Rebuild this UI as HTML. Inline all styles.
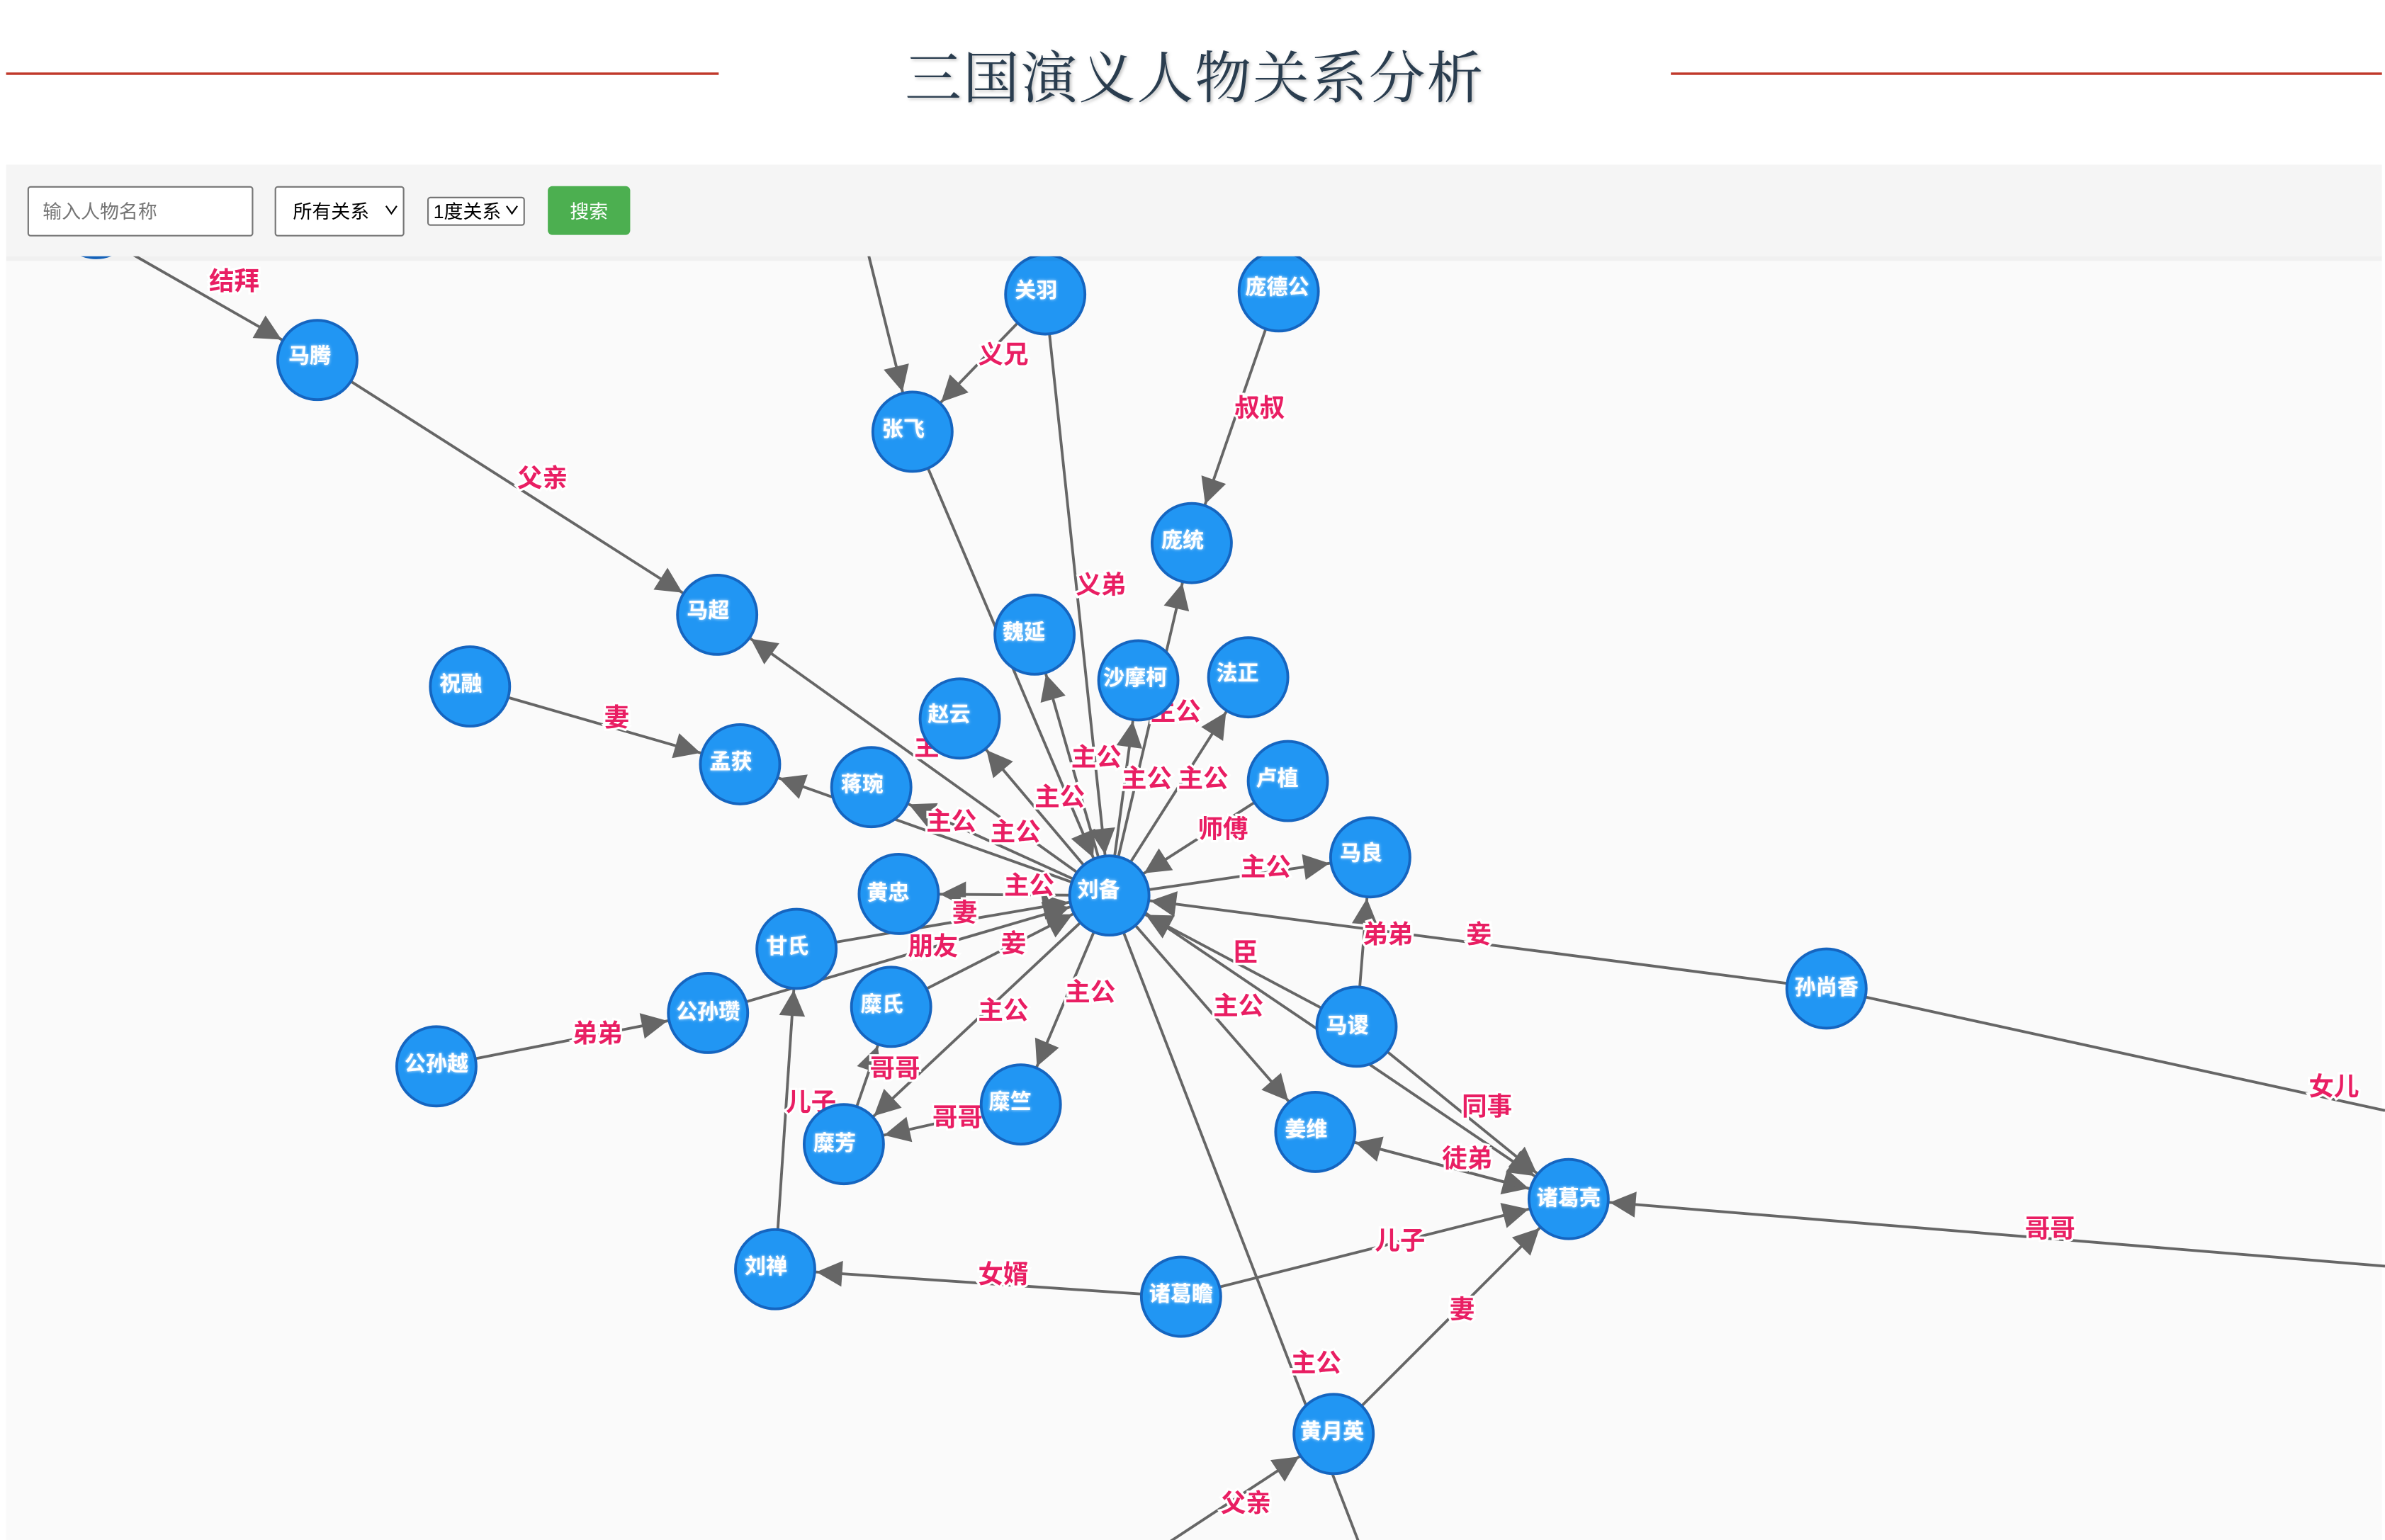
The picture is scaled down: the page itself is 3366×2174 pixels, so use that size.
<!DOCTYPE html>
<html><head><meta charset="utf-8">
<style>
html,body{margin:0;padding:0;background:#fff;}
svg{display:block;}
.t{font-family:"Liberation Sans","Noto Sans CJK SC",sans-serif;}
.lbl{font-family:"Liberation Sans","Noto Sans CJK SC",sans-serif;font-size:16.5px;fill:#e91e63;stroke:#fff;stroke-width:3px;paint-order:stroke;font-weight:600;}
.nl{font-family:"Liberation Sans","Noto Sans CJK SC",sans-serif;font-size:14px;fill:#fff;font-weight:700;}
.e{stroke:#666;stroke-width:1.8;fill:none;}
.n{fill:#2196f3;stroke:#1565c0;stroke-width:1.8;}
</style></head><body>
<svg width="3366" height="2174" viewBox="0 0 1563 1009.5" preserveAspectRatio="none" xmlns="http://www.w3.org/2000/svg">
<defs>
<marker id="a" markerUnits="userSpaceOnUse" viewBox="-50 -10 60 20" refX="0" refY="0" markerWidth="60" markerHeight="20" orient="auto">
<path d="M-44,-8.5 L-27,0 L-44,8.5 Z" fill="#666"/>
</marker>
<filter id="sh"><feDropShadow dx="1" dy="1" stdDeviation="1" flood-color="#000" flood-opacity="0.25"/></filter>
<filter id="gl"><feDropShadow dx="0" dy="0" stdDeviation="1" flood-color="#fff" flood-opacity="0.8"/></filter>
</defs>
<rect x="0" y="0" width="1563" height="1010" fill="#fff"/>
<rect x="4" y="47.5" width="467" height="1.6" fill="#c0392b"/>
<rect x="1095" y="47.5" width="466" height="1.6" fill="#c0392b"/>
<text x="783" y="64" text-anchor="middle" filter="url(#sh)" style="font-family:'Liberation Serif','Noto Serif CJK SC',serif;font-size:37px;fill:#2c3e50;letter-spacing:1px">三国演义人物关系分析</text>
<rect x="4" y="168" width="1557" height="842" fill="#fafafa"/>

<g class="e">
<line x1="40" y1="140" x2="208" y2="236" marker-end="url(#a)"/>
<line x1="208" y1="236" x2="470" y2="403" marker-end="url(#a)"/>
<line x1="727" y1="587" x2="470" y2="403" marker-end="url(#a)"/>
<line x1="560" y1="130" x2="598" y2="283" marker-end="url(#a)"/>
<line x1="685" y1="193" x2="598" y2="283" marker-end="url(#a)"/>
<line x1="685" y1="193" x2="727" y2="587" marker-end="url(#a)"/>
<line x1="598" y1="283" x2="727" y2="587" marker-end="url(#a)"/>
<line x1="838" y1="191" x2="781" y2="356" marker-end="url(#a)"/>
<line x1="727" y1="587" x2="781" y2="356" marker-end="url(#a)"/>
<line x1="727" y1="587" x2="678" y2="416" marker-end="url(#a)"/>
<line x1="727" y1="587" x2="746" y2="446" marker-end="url(#a)"/>
<line x1="727" y1="587" x2="818" y2="444" marker-end="url(#a)"/>
<line x1="727" y1="587" x2="629" y2="471" marker-end="url(#a)"/>
<line x1="308" y1="450" x2="485" y2="501" marker-end="url(#a)"/>
<line x1="727" y1="587" x2="485" y2="501" marker-end="url(#a)"/>
<line x1="727" y1="587" x2="571" y2="516" marker-end="url(#a)"/>
<line x1="844" y1="512" x2="727" y2="587" marker-end="url(#a)"/>
<line x1="727" y1="587" x2="898" y2="562" marker-end="url(#a)"/>
<line x1="727" y1="587" x2="589" y2="586" marker-end="url(#a)"/>
<line x1="522" y1="622" x2="727" y2="587" marker-end="url(#a)"/>
<line x1="464" y1="664" x2="727" y2="587" marker-end="url(#a)"/>
<line x1="584" y1="660" x2="727" y2="587" marker-end="url(#a)"/>
<line x1="1197" y1="648" x2="727" y2="587" marker-end="url(#a)"/>
<line x1="889" y1="673" x2="898" y2="562" marker-end="url(#a)"/>
<line x1="889" y1="673" x2="727" y2="587" marker-end="url(#a)"/>
<line x1="727" y1="587" x2="862" y2="742" marker-end="url(#a)"/>
<line x1="727" y1="587" x2="669" y2="724" marker-end="url(#a)"/>
<line x1="727" y1="587" x2="553" y2="750" marker-end="url(#a)"/>
<line x1="669" y1="724" x2="553" y2="750" marker-end="url(#a)"/>
<line x1="553" y1="750" x2="584" y2="660" marker-end="url(#a)"/>
<line x1="508" y1="832" x2="522" y2="622" marker-end="url(#a)"/>
<line x1="286" y1="699" x2="464" y2="664" marker-end="url(#a)"/>
<line x1="1197" y1="648" x2="1563" y2="728"/>
<line x1="1563" y1="830" x2="1028" y2="786" marker-end="url(#a)"/>
<line x1="889" y1="673" x2="1028" y2="786" marker-end="url(#a)"/>
<line x1="750" y1="598" x2="1028" y2="786" marker-end="url(#a)"/>
<line x1="862" y1="742" x2="1028" y2="786" marker-end="url(#a)"/>
<line x1="1028" y1="786" x2="862" y2="742" marker-end="url(#a)"/>
<line x1="774" y1="850" x2="1028" y2="786" marker-end="url(#a)"/>
<line x1="774" y1="850" x2="508" y2="832" marker-end="url(#a)"/>
<line x1="727" y1="587" x2="892" y2="1015"/>
<line x1="874" y1="940" x2="1028" y2="786" marker-end="url(#a)"/>
<line x1="760" y1="1015" x2="874" y2="940" marker-end="url(#a)"/>
</g>

<g class="lbl">
<text x="137" y="190">结拜</text>
<text x="339" y="319">父亲</text>
<text x="641" y="238">义兄</text>
<text x="705" y="389">义弟</text>
<text x="809" y="273">叔叔</text>
<text x="754" y="472">主公</text>
<text x="702" y="502">主公</text>
<text x="735" y="516">主公</text>
<text x="772" y="516">主公</text>
<text x="678" y="528">主公</text>
<text x="599" y="495">主</text>
<text x="396" y="476">妻</text>
<text x="607" y="544">主公</text>
<text x="649" y="551">主公</text>
<text x="785" y="549">师傅</text>
<text x="813" y="574">主公</text>
<text x="658" y="586">主公</text>
<text x="624" y="604">妻</text>
<text x="595" y="626">朋友</text>
<text x="656" y="624">妾</text>
<text x="961" y="618">妾</text>
<text x="893" y="618">弟弟</text>
<text x="808" y="630">臣</text>
<text x="795" y="665">主公</text>
<text x="698" y="656">主公</text>
<text x="641" y="668">主公</text>
<text x="570" y="706">哥哥</text>
<text x="611" y="738">哥哥</text>
<text x="515" y="728">儿子</text>
<text x="375" y="683">弟弟</text>
<text x="1513" y="718">女儿</text>
<text x="1327" y="811">哥哥</text>
<text x="958" y="731">同事</text>
<text x="945" y="765">徒弟</text>
<text x="901" y="819">儿子</text>
<text x="641" y="841">女婿</text>
<text x="950" y="864">妻</text>
<text x="846" y="899">主公</text>
<text x="800" y="991">父亲</text>
</g>

<g>
<circle class="n" cx="63" cy="143" r="26"/>
<circle class="n" cx="727" cy="587" r="26"/>
<circle class="n" cx="685" cy="193" r="26"/>
<circle class="n" cx="838" cy="191" r="26"/>
<circle class="n" cx="208" cy="236" r="26"/>
<circle class="n" cx="598" cy="283" r="26"/>
<circle class="n" cx="781" cy="356" r="26"/>
<circle class="n" cx="470" cy="403" r="26"/>
<circle class="n" cx="678" cy="416" r="26"/>
<circle class="n" cx="746" cy="446" r="26"/>
<circle class="n" cx="818" cy="444" r="26"/>
<circle class="n" cx="308" cy="450" r="26"/>
<circle class="n" cx="629" cy="471" r="26"/>
<circle class="n" cx="485" cy="501" r="26"/>
<circle class="n" cx="571" cy="516" r="26"/>
<circle class="n" cx="844" cy="512" r="26"/>
<circle class="n" cx="898" cy="562" r="26"/>
<circle class="n" cx="589" cy="586" r="26"/>
<circle class="n" cx="522" cy="622" r="26"/>
<circle class="n" cx="1197" cy="648" r="26"/>
<circle class="n" cx="464" cy="664" r="26"/>
<circle class="n" cx="584" cy="660" r="26"/>
<circle class="n" cx="889" cy="673" r="26"/>
<circle class="n" cx="286" cy="699" r="26"/>
<circle class="n" cx="669" cy="724" r="26"/>
<circle class="n" cx="862" cy="742" r="26"/>
<circle class="n" cx="553" cy="750" r="26"/>
<circle class="n" cx="1028" cy="786" r="26"/>
<circle class="n" cx="508" cy="832" r="26"/>
<circle class="n" cx="774" cy="850" r="26"/>
<circle class="n" cx="874" cy="940" r="26"/>
</g>
<g class="nl" filter="url(#gl)">
<text x="706" y="588">刘备</text>
<text x="665" y="195">关羽</text>
<text x="816" y="193">庞德公</text>
<text x="189" y="238">马腾</text>
<text x="578" y="286">张飞</text>
<text x="761" y="359">庞统</text>
<text x="450" y="405">马超</text>
<text x="657" y="419">魏延</text>
<text x="723" y="449">沙摩柯</text>
<text x="797" y="446">法正</text>
<text x="288" y="453">祝融</text>
<text x="608" y="473">赵云</text>
<text x="465" y="504">孟获</text>
<text x="551" y="519">蒋琬</text>
<text x="823" y="515">卢植</text>
<text x="878" y="564">马良</text>
<text x="568" y="590">黄忠</text>
<text x="502" y="625">甘氏</text>
<text x="1176" y="652">孙尚香</text>
<text x="443" y="668">公孙瓒</text>
<text x="564" y="663">糜氏</text>
<text x="869" y="677">马谡</text>
<text x="265" y="702">公孙越</text>
<text x="648" y="727">糜竺</text>
<text x="842" y="745">姜维</text>
<text x="533" y="754">糜芳</text>
<text x="1007" y="790">诸葛亮</text>
<text x="488" y="835">刘禅</text>
<text x="753" y="853">诸葛瞻</text>
<text x="852" y="943">黄月英</text>
</g>

<rect x="4" y="108" width="1557" height="60" fill="#f5f5f5"/>
<rect x="4" y="168" width="1557" height="3" fill="#000" opacity="0.04"/>
<rect x="18.5" y="122.5" width="147" height="32" rx="1.5" fill="#fff" stroke="#767676" stroke-width="1"/>
<text class="t" x="28" y="143" style="font-size:12.5px;fill:#757575">输入人物名称</text>
<rect x="180.5" y="122.5" width="84" height="32" rx="1.5" fill="#fff" stroke="#767676" stroke-width="1"/>
<text class="t" x="192" y="143" style="font-size:12.5px;fill:#000">所有关系</text>
<path d="M253,135 L256.5,140 L260,135" stroke="#000" stroke-width="1" fill="none"/>
<rect x="280.5" y="129.5" width="63" height="18" rx="1.5" fill="#fff" stroke="#767676" stroke-width="1"/>
<text class="t" x="284" y="143" style="font-size:12.5px;fill:#000">1度关系</text>
<path d="M332,135 L335.5,140 L339,135" stroke="#000" stroke-width="1" fill="none"/>
<rect x="359" y="122" width="54" height="32" rx="3" fill="#4caf50"/>
<text class="t" x="386" y="143" text-anchor="middle" style="font-size:12.5px;fill:#fff">搜索</text>
</svg>
</body></html>
